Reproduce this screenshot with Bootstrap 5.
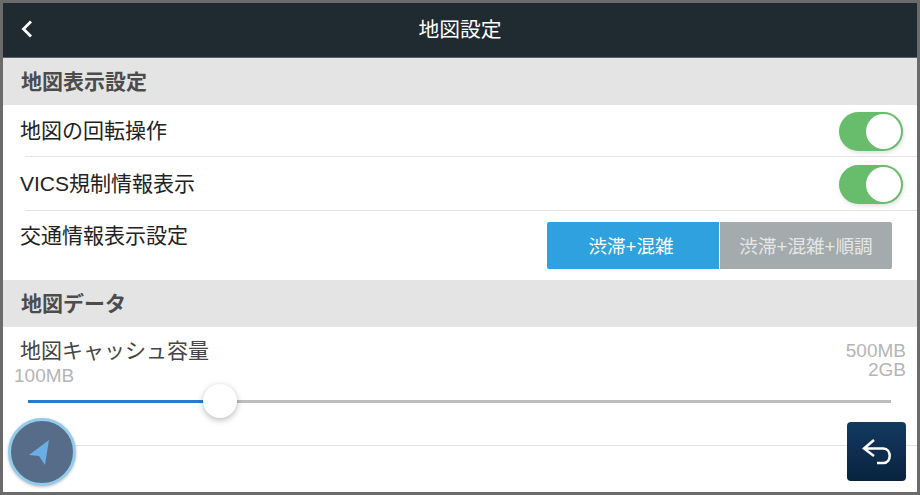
<!DOCTYPE html>
<html lang="ja">
<head>
<meta charset="utf-8">
<title>地図設定</title>
<link href="https://cdn.jsdelivr.net/npm/bootstrap@5.3.0/dist/css/bootstrap.min.css" rel="stylesheet">
<style>
html,body{height:495px;overflow:hidden;background:#fff}
body{font-family:"Liberation Sans","Noto Sans CJK JP",sans-serif;color:#2b2b2b}
.frame{width:920px;height:495px;border:3px solid #6b6b6b;position:relative;overflow:hidden;background:#fff}
.topbar{height:55px;background:#1f2a31;border-bottom:1px solid #59626a;color:#fff;font-size:20.8px;position:relative}
.backbtn{position:absolute;left:17px;top:16px;line-height:0}
.sect{height:47px;background:#e4e4e4;padding-left:18px;font-size:21px;font-weight:700;color:#4c4c4c;line-height:47px}
.sect2{margin-top:1px}
.setrow{padding-left:17px;padding-right:14px;font-size:21px;color:#222}
.r1{height:52px}
.r2{height:54px}
.rule{position:relative}
.rule::after{content:"";position:absolute;left:22px;right:0;bottom:0;height:1px;background:#e3e3e3}
.r3{height:68px;align-items:flex-start;padding-top:9px;padding-right:25px}
.swt{width:64px;height:39px;border-radius:20px;background:#68bd6c;position:relative;box-shadow:1px 2px 4px rgba(0,0,0,.12)}
.swt::after{content:"";position:absolute;right:2px;top:2px;width:35px;height:35px;border-radius:50%;background:#fff}
.segbtn{height:47px;border:0;border-radius:0;font-size:18.6px;color:#fff;padding:2px 0 0;margin-top:2px}
.seg-on{width:172px;background:#2ea1de;border-radius:2px 0 0 2px;padding-right:4px}
.seg-off{width:172px;margin-left:1px;background:#a4abad;color:#e4e6e6;border-radius:0 2px 2px 0}
.cache{height:118px;position:relative}
.cachelabel{position:absolute;left:17px;top:8px;font-size:21px;color:#444}
.minv{position:absolute;left:11px;top:39px;font-size:19px;color:#b5b5b5;line-height:20px}
.maxv{position:absolute;right:11px;top:14px;font-size:19px;color:#b5b5b5;line-height:19px;text-align:right}
.track{position:absolute;left:25px;width:863px;top:73px;height:3px;background:#bdbdbd}
.fill{height:3px;background:#2a7bc8}
.knob{position:absolute;left:200px;top:57px;width:34px;height:34px;border-radius:50%;background:#fff;box-shadow:0 2px 6px rgba(0,0,0,.28)}
.baseline{position:absolute;left:22px;right:0;top:118px;height:1px;background:#e3e3e3}
.locbtn{position:absolute;left:5px;top:415px;width:68px;height:68px;border-radius:50%;background:#566c88;border:3px solid #93cbec;display:flex;align-items:center;justify-content:center;box-shadow:0 1px 3px rgba(0,0,0,.25)}
.undobtn{position:absolute;left:844px;top:419px;width:59px;height:59px;border-radius:4px;background:linear-gradient(#123a60,#0a2240);display:flex;align-items:center;justify-content:center}
</style>
</head>
<body>
<div class="frame">
  <div class="topbar d-flex align-items-center justify-content-center">
    <span class="backbtn"><svg width="14" height="20" viewBox="0 0 14 20"><path d="M11 2.500 3.500 10 11 17.500" fill="none" stroke="#fff" stroke-width="2.800"/></svg></span>
    <span>地図設定</span>
  </div>
  <div class="sect">地図表示設定</div>
  <div class="setrow r1 rule d-flex align-items-center justify-content-between">
    <span>地図の回転操作</span><span class="swt"></span>
  </div>
  <div class="setrow r2 rule d-flex align-items-center justify-content-between">
    <span>VICS規制情報表示</span><span class="swt"></span>
  </div>
  <div class="setrow r3 d-flex justify-content-between">
    <span>交通情報表示設定</span>
    <div class="d-flex">
      <button class="btn segbtn seg-on" type="button">渋滞+混雑</button>
      <button class="btn segbtn seg-off" type="button">渋滞+混雑+順調</button>
    </div>
  </div>
  <div class="sect sect2">地図データ</div>
  <div class="cache">
    <span class="cachelabel">地図キャッシュ容量</span>
    <span class="minv">100MB</span>
    <span class="maxv">500MB<br>2GB</span>
    <div class="track"><div class="fill" style="width:22%"></div></div>
    <span class="knob"></span>
    <div class="baseline"></div>
  </div>
  <div class="locbtn"><svg width="28" height="26" viewBox="0 0 28 26"><path d="M21 1 1 16 11 17 17 26Z" fill="#6aaee6"/></svg></div>
  <div class="undobtn"><svg width="32" height="28" viewBox="0 0 32 28"><path d="M13 2 3 10.500 13 18M3 10.500H22.500C30.500 10.500 31 25 22.500 25H16" fill="none" stroke="#fff" stroke-width="2.500"/></svg></div>
</div>
<script src="https://cdn.jsdelivr.net/npm/bootstrap@5.3.0/dist/js/bootstrap.bundle.min.js"></script>
</body>
</html>
